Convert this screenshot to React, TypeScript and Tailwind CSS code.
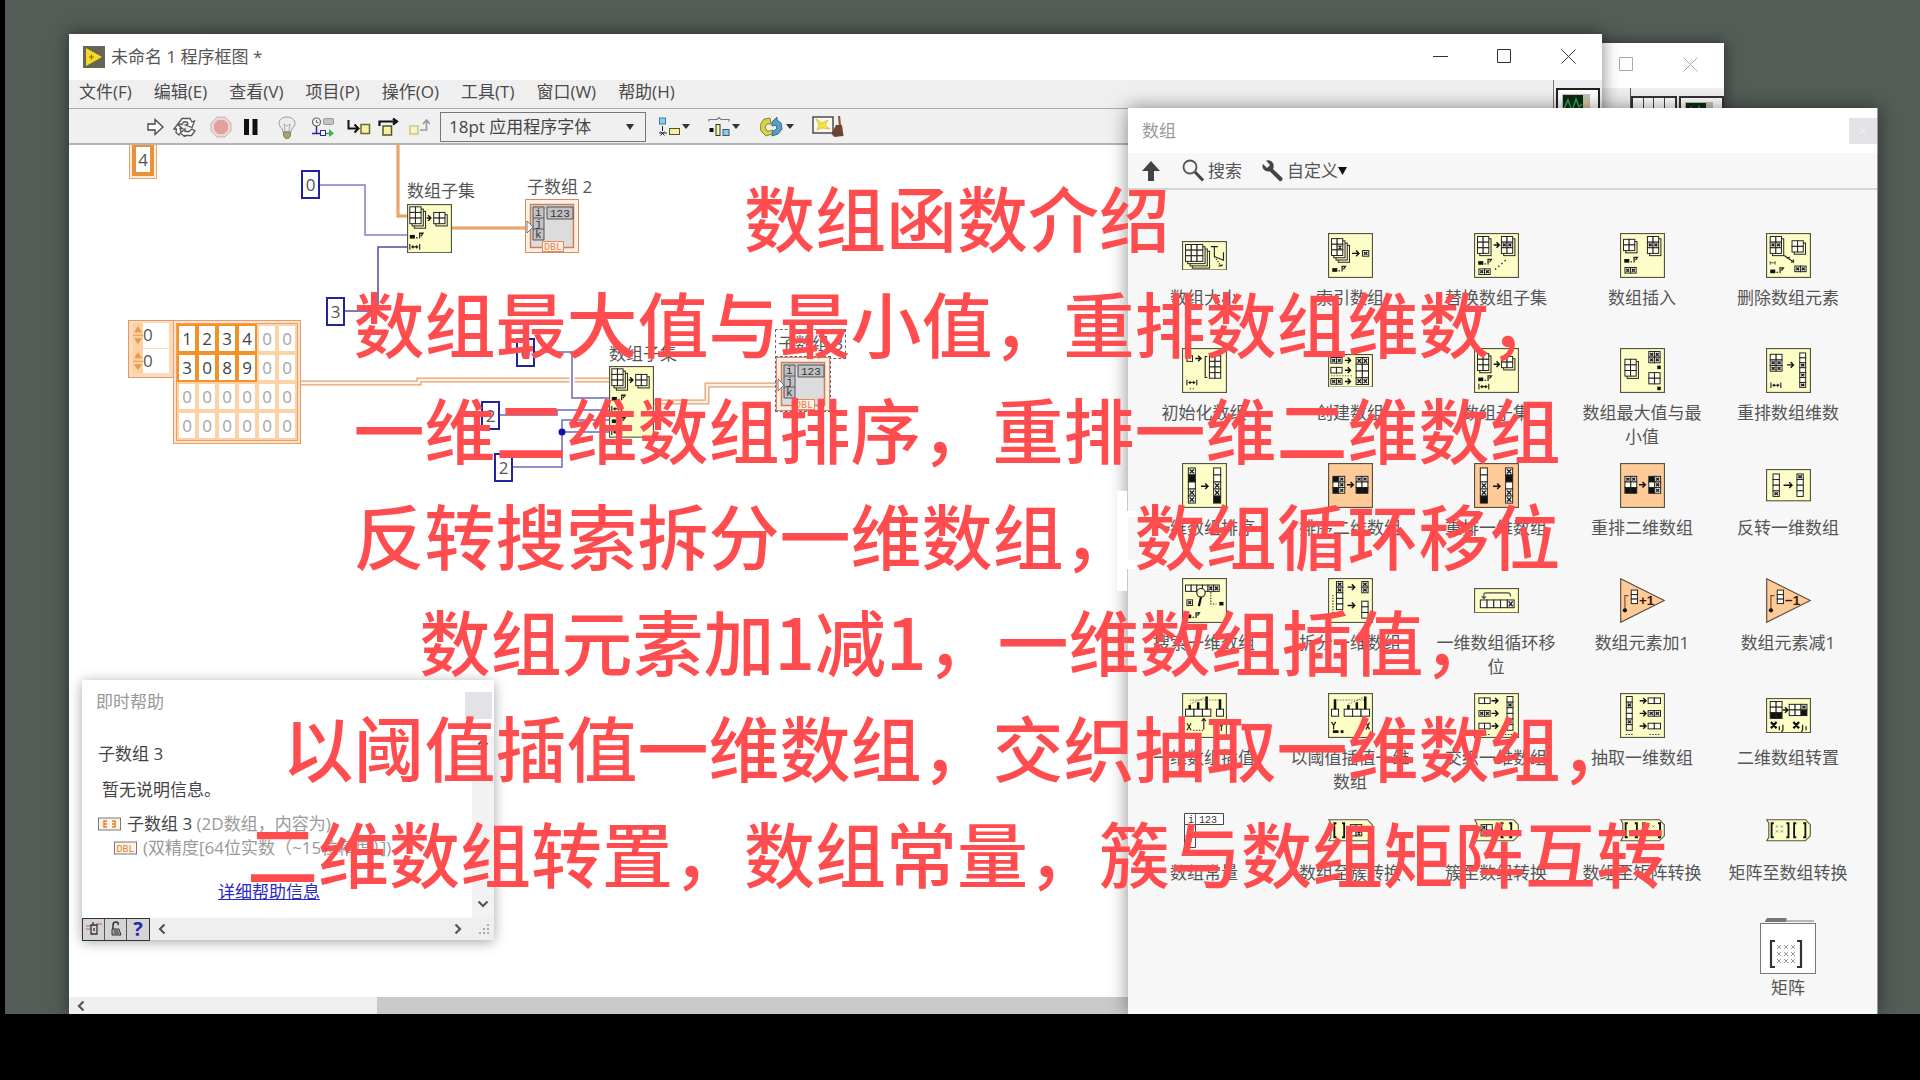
import React, { FC, ReactNode } from 'react'

const menus = ['文件(F)', '编辑(E)', '查看(V)', '项目(P)', '操作(O)', '工具(T)', '窗口(W)', '帮助(H)']

const captions = [
  '数组函数介绍',
  '数组最大值与最小值，重排数组维数，',
  '一维二维数组排序，重排一维二维数组',
  '反转搜索拆分一维数组，数组循环移位',
  '数组元素加1减1，一维数组插值，',
  '以阈值插值一维数组，交织抽取一维数组，',
  '二维数组转置，数组常量，簇与数组矩阵互转',
]

const YELLOW = '#fdfdc8'
const ORANGE = '#fdca98'

/* ---------- icon primitives, drawn on a 32 unit wide tile ---------- */

type CellsProps = { x: number; y: number; c: number; r: number; w?: number; h?: number; map?: string; fill?: string }

// map holds one character per cell: x = black, o = marked, anything else = empty
const Cells: FC<CellsProps> = ({ x, y, c, r, w = 4, h = 4, map = '', fill = '#fdfdf0' }) => (
  <g stroke="#222" strokeWidth="0.7">
    {Array.from({ length: c * r }, (_, i) => {
      const cx = x + (i % c) * w
      const cy = y + Math.floor(i / c) * h
      return (
        <g key={i}>
          <rect fill={map[i] === 'x' ? '#111' : fill} height={h} width={w} x={cx} y={cy} />
          {map[i] === 'o' && <path d={`M${cx + 1} ${cy + 1}l${w - 2} ${h - 2}m0 ${2 - h}l${2 - w} ${h - 2}`} strokeWidth="1" />}
        </g>
      )
    })}
  </g>
)

const Stack: FC<CellsProps & { n?: number }> = ({ n = 1, ...p }) => {
  const w = p.c * (p.w ?? 4)
  const h = p.r * (p.h ?? 4)
  return (
    <g>
      {Array.from({ length: n }, (_, i) => n - i).map(k => (
        <rect
          fill={YELLOW}
          height={h}
          key={k}
          stroke="#222"
          strokeWidth="0.7"
          width={w}
          x={p.x + k * 1.6}
          y={p.y + k * 1.6}
        />
      ))}
      <Cells {...p} />
    </g>
  )
}

const Arrow: FC<{ x: number; y: number; w?: number }> = ({ x, y, w = 5 }) => (
  <path d={`M${x} ${y}h${w}m-2 -2l2 2l-2 2`} fill="none" stroke="#111" strokeWidth="1" />
)

const Span: FC<{ x: number; y: number }> = ({ x, y }) => (
  <path
    d={`M${x} ${y - 2}v4M${x + 7} ${y - 2}v4M${x + 1} ${y}h5m-3.5 -1l-1 1l1 1m2 -2l1 1l-1 1`}
    fill="none"
    stroke="#222"
    strokeWidth="0.8"
  />
)

const Index: FC<{ x: number; y: number }> = ({ x, y }) => (
  <g>
    <rect fill="#111" height="2.6" width="3.6" x={x} y={y} />
    <path d={`M${x + 4.5} ${y + 2}h1M${x + 7} ${y + 2.4}v-3.6h2.4l-1.4 2`} fill="none" stroke="#222" strokeWidth="0.9" />
  </g>
)

const Tile: FC<{ h?: number; fill?: string; children?: ReactNode }> = ({ h = 32, fill = YELLOW, children }) => (
  <svg aria-hidden="true" className="block w-[45px]" viewBox={`0 0 32 ${h}`}>
    <rect fill={fill} height={h - 0.8} stroke="#55553f" strokeWidth="0.8" width="31.2" x="0.4" y="0.4" />
    {children}
  </svg>
)

const Tab: FC<{ children?: ReactNode }> = ({ children }) => (
  <svg aria-hidden="true" className="block w-[45px]" viewBox="0 0 32 16">
    <path d="M.5 .5H28L31.5 4V12L28 15.5H.5L2 13V3Z" fill={YELLOW} stroke="#55553f" strokeWidth="0.8" />
    {children}
  </svg>
)

const Bracket: FC<{ x: number; w: number; y?: number; h?: number }> = ({ x, w, y = 3, h = 10 }) => (
  <path
    d={`M${x + 2} ${y}h-1.5v${h}h1.5M${x + w - 2} ${y}h1.5v${h}h-1.5`}
    fill="none"
    stroke="#111"
    strokeWidth="1.3"
  />
)

const Dots: FC<{ x: number; y: number; c: number; r: number; s?: number }> = ({ x, y, c, r, s = 3 }) => (
  <g stroke="#777" strokeWidth="0.5">
    {Array.from({ length: c * r }, (_, i) => (
      <path d={`M${x + (i % c) * s} ${y + Math.floor(i / c) * s}l1.6 1.6m0 -1.6l-1.6 1.6`} key={i} />
    ))}
  </g>
)

const Triangle: FC<{ label: string }> = ({ label }) => (
  <svg aria-hidden="true" className="block w-[45px]" viewBox="0 0 32 32">
    <path d="M.5 .5L31.5 16L.5 31.5Z" fill={ORANGE} stroke="#5a4a3a" strokeWidth="0.8" />
    <path d="M3.5 22V12.5H6" fill="none" stroke="#7a4a20" strokeWidth="0.8" />
    <circle cx="3.5" cy="23" fill="#111" r="1.5" />
    <Cells c={1} h={3.2} r={3} w={4.4} x={8} y={8.6} />
    <text fill="#3a1808" fontFamily="Liberation Sans" fontSize="9.5" fontWeight="700" x="13.5" y="19.5">
      {label}
    </text>
  </svg>
)

const Bars: FC<{ x: number; lone: number }> = ({ x, lone }) => (
  <g>
    <Cells c={3} h={5} r={1} w={6} x={x} y={11.5} />
    <Cells c={1} h={5} r={1} w={5} x={lone} y={11.5} />
    <path
      d={`M${x + 3} 11.5v-3M${x + 9} 11.5v-5M${x + 15} 11.5v-9M${lone + 2.5} 11.5v-7`}
      fill="none"
      stroke="#111"
      strokeWidth="1.8"
    />
    <path
      d={`M${x + 3} 8L${x + 15} 2.6M${Math.min(x + 3, lone + 2)} 5H${Math.max(x + 15, lone + 2)}`}
      fill="none"
      stroke="#555"
      strokeDasharray="1 1"
      strokeWidth="0.6"
    />
  </g>
)

/* ---------- palette content ---------- */

const functions: { name: string; icon: ReactNode }[] = [
  {
    name: '数组大小',
    icon: (
      <Tile h={21}>
        <Stack c={3} n={3} r={3} w={4.1} x={2.5} y={2.5} />
        <path d="M20.5 4h5M23 4v7l6 2.5M23 11M26 18l3 -1M29.5 8v6" fill="none" stroke="#222" strokeWidth="0.8" />
        <path d="M23 11l5 7" stroke="#222" strokeDasharray="1 1" strokeWidth="0.8" />
      </Tile>
    ),
  },
  {
    name: '索引数组',
    icon: (
      <Tile>
        <Stack c={2} map="   o" n={3} r={3} w={4} x={2.5} y={4} />
        <Arrow x={17} y={14.5} w={5} />
        <Cells c={1} map="o" r={1} w={4.5} x={24.5} y={12.5} />
        <Index x={3} y={25} />
      </Tile>
    ),
  },
  {
    name: '替换数组子集',
    icon: (
      <Tile>
        <Stack c={2} n={1} r={3} w={4} x={2.5} y={2.5} />
        <Arrow x={14} w={4} y={8.5} />
        <Stack c={2} map="  oo" n={1} r={3} w={4} x={19.5} y={2.5} />
        <Index x={3} y={20} />
        <Cells c={2} map="oo" r={1} w={4} x={3.5} y={25.5} />
        <path d="M15 26l8 -7" stroke="#222" strokeDasharray="1 2" />
      </Tile>
    ),
  },
  {
    name: '数组插入',
    icon: (
      <Tile>
        <Stack c={2} n={1} r={2} w={4} x={2.5} y={4.5} />
        <Stack c={2} map="  oo" n={1} r={3} w={4} x={19.5} y={2.5} />
        <Index x={3} y={18.5} />
        <Cells c={2} map="oo" r={1} w={4} x={3.5} y={24.5} />
      </Tile>
    ),
  },
  {
    name: '删除数组元素',
    icon: (
      <Tile>
        <Stack c={2} map="  oo" n={1} r={3} w={4} x={3} y={2.5} />
        <Stack c={2} n={1} r={2} w={4} x={18.5} y={5.5} />
        <path d="M13 16l7 5m-5 -3l2 -1m1 4l2 -2" fill="none" stroke="#222" strokeWidth="0.8" />
        <path d="M3 20v2.500M3 21.200h3.500M6.500 20v2.500" stroke="#444" strokeWidth="0.6" />
        <Index x={3} y={26} />
        <Cells c={2} map="oo" r={1} w={4} x={20.5} y={23.5} />
      </Tile>
    ),
  },
  {
    name: '初始化数组',
    icon: (
      <Tile>
        <Cells c={1} r={1} x={3.5} y={5.5} />
        <Arrow x={9.5} w={4} y={7.5} />
        <path d="M18 6h-1.500v15h1.500" fill="none" stroke="#222" strokeWidth="0.8" />
        <Cells c={2} r={4} w={4} x={19.5} y={5.5} />
        <Span x={3.5} y={24.5} />
        <path d="M5.500 29h4" stroke="#444" strokeDasharray="1 1" strokeWidth="0.7" />
      </Tile>
    ),
  },
  {
    name: '创建数组',
    icon: (
      <Tile h={24}>
        <Cells c={2} map="oo" r={1} x={2} y={2.5} />
        <Cells c={2} r={1} x={2} y={9.5} />
        <Cells c={2} map="oo" r={1} x={2} y={17.5} />
        <Arrow x={12} w={4} y={4.5} />
        <Arrow x={12} w={4} y={11.5} />
        <Arrow x={12} w={4} y={19.5} />
        <Cells c={2} map="oo    oo" r={4} h={4.8} w={4.4} x={20} y={2.5} />
        <path d="M2 15.500h15" stroke="#444" strokeDasharray="1 1" strokeWidth="0.6" />
      </Tile>
    ),
  },
  {
    name: '数组子集',
    icon: (
      <Tile>
        <Stack c={2} n={1} r={3} w={4} x={2.5} y={4} />
        <Arrow x={14} w={4} y={11.5} />
        <Stack c={2} n={1} r={2} w={4} x={19.5} y={6} />
        <Index x={3} y={21} />
        <Span x={3.5} y={27.5} />
      </Tile>
    ),
  },
  {
    name: '数组最大值与最小值',
    icon: (
      <Tile>
        <Stack c={2} n={1} r={3} w={4} x={3.5} y={8} />
        <Cells c={2} map="oooo" r={2} x={20.5} y={2.5} />
        <rect fill="#111" height="2.500" width="2.500" x="26.500" y="12.500" />
        <Cells c={2} r={2} x={20.5} y={17.5} />
        <rect fill="#111" height="2.500" width="2.500" x="26.500" y="27.500" />
      </Tile>
    ),
  },
  {
    name: '重排数组维数',
    icon: (
      <Tile>
        <Cells c={2} map="  oooo" r={3} w={4.2} x={3} y={4.5} />
        <Arrow x={15} w={4.5} y={12} />
        <Cells c={1} h={3.5} map="  o o oo" r={7} w={4.2} x={24} y={3.5} />
        <Span x={3.5} y={26.5} />
      </Tile>
    ),
  },
  {
    name: '一维数组排序',
    icon: (
      <Tile>
        <Cells c={1} h={5} map="ox oo" r={5} w={5} x={4.5} y={3.5} />
        <Arrow x={13.5} w={5} y={16.5} />
        <Cells c={1} h={5} map="  oox" r={5} w={5} x={22.5} y={3.5} />
      </Tile>
    ),
  },
  {
    name: '排序二维数组',
    icon: (
      <Tile fill={ORANGE}>
        <Cells c={2} map="xo oxo" r={3} w={4.2} x={3.5} y={9.5} />
        <Arrow x={13.5} w={4.5} y={15.5} />
        <Cells c={2} map="oo  xx" r={3} w={4.2} x={20} y={9.5} />
      </Tile>
    ),
  },
  {
    name: '重排一维数组',
    icon: (
      <Tile fill={ORANGE}>
        <Cells c={1} h={5} map="  oox" r={5} w={5} x={4.5} y={3.5} />
        <Arrow x={13.5} w={5} y={16.5} />
        <Cells c={1} h={5} map="ox oo" r={5} w={5} x={22.5} y={3.5} />
      </Tile>
    ),
  },
  {
    name: '重排二维数组',
    icon: (
      <Tile fill={ORANGE}>
        <Cells c={2} map="oo  xx" r={3} w={4.2} x={3.5} y={9.5} />
        <Arrow x={13.5} w={4.5} y={15.5} />
        <Cells c={2} map="xo oxo" r={3} w={4.2} x={20.5} y={9.5} />
      </Tile>
    ),
  },
  {
    name: '反转一维数组',
    icon: (
      <Tile h={23}>
        <Cells c={1} h={4} map="   o" r={4} w={4.5} x={5} y={3.5} />
        <Arrow x={12.5} w={6} y={11.5} />
        <Cells c={1} h={4} map="o" r={4} w={4.5} x={22} y={3.5} />
      </Tile>
    ),
  },
  {
    name: '搜索一维数组',
    icon: (
      <Tile>
        <Cells c={6} h={4.5} map="    oo" r={1} w={4} x={2.5} y={5} />
        <circle cx="13.500" cy="10.500" fill={YELLOW} r="3" stroke="#222" strokeWidth="0.8" />
        <path d="M13.500 13.500l-1.500 6.500" stroke="#111" strokeWidth="1.600" />
        <Cells c={1} map="o" r={1} x={3.5} y={15.5} />
        <path d="M20.500 10v8.500h4" fill="none" stroke="#222" strokeDasharray="1 1" strokeWidth="0.8" />
        <rect fill="#111" height="2.500" width="3" x="26.500" y="17" />
        <Index x={3} y={26} />
      </Tile>
    ),
  },
  {
    name: '拆分一维数组',
    icon: (
      <Tile>
        <Cells c={1} map="oo   " r={5} w={4.5} x={6} y={2.5} />
        <Arrow x={14} w={5} y={6.5} />
        <Cells c={1} map="oo" r={2} w={4.5} x={24} y={2.5} />
        <Arrow x={14} w={5} y={19.5} />
        <Cells c={1} r={3} w={4.5} x={24} y={16.5} />
        <path d="M3.500 12v16" stroke="#333" strokeDasharray="1 1" strokeWidth="0.8" />
      </Tile>
    ),
  },
  {
    name: '一维数组循环移位',
    icon: (
      <Tile h={18}>
        <Cells c={5} h={5.5} map="    o" r={1} w={4.8} x={4.5} y={8.5} />
        <path d="M7 7V4.500Q7 3.500 8.500 3.500H24Q26 3.500 26 6M5.500 6l1.500 1.500L8.500 6" fill="none" stroke="#444" strokeWidth="0.8" />
      </Tile>
    ),
  },
  { name: '数组元素加1', icon: <Triangle label="+1" /> },
  { name: '数组元素减1', icon: <Triangle label="−1" /> },
  {
    name: '一维数组插值',
    icon: (
      <Tile>
        <Bars lone={24.5} x={2.5} />
        <path d="M3.500 21.500l3 5m0 -5l-3 5M15.500 26v-8m-1.500 2l1.500 -2l1.500 2M26.500 21.500l1.500 2.500l1.500 -2.500M28 24v3" fill="none" stroke="#222" strokeWidth="0.8" />
        <path d="M8 26.500h7" stroke="#222" strokeDasharray="1 1" strokeWidth="0.8" />
      </Tile>
    ),
  },
  {
    name: '以阈值插值一维数组',
    icon: (
      <Tile>
        <Bars lone={2.5} x={11.5} />
        <path d="M2.500 20.500l1.500 2.500l1.500 -2.500M4 23v3M27 21l2.500 5m0 -5l-2.500 5" fill="none" stroke="#222" strokeWidth="0.9" />
        <path d="M3.500 27.500h4m1.500 0h2" stroke="#111" strokeWidth="2" />
      </Tile>
    ),
  },
  {
    name: '交织一维数组',
    icon: (
      <Tile>
        <Cells c={2} r={1} x={3.5} y={3.5} />
        <Cells c={2} map="oo" r={1} x={3.5} y={12.5} />
        <Cells c={2} r={1} x={3.5} y={21.5} />
        <Arrow x={12.5} w={4.5} y={5.5} />
        <Arrow x={12.5} w={4.5} y={14.5} />
        <Arrow x={12.5} w={4.5} y={23.5} />
        <Cells c={1} map=" o  o " r={6} w={4.2} x={23.5} y={2.5} />
        <path d="M6 29.500h5M22 29.500h7" stroke="#333" strokeDasharray="1 1" strokeWidth="0.8" />
      </Tile>
    ),
  },
  {
    name: '抽取一维数组',
    icon: (
      <Tile>
        <Cells c={1} map=" o  o " r={6} w={4.2} x={4.5} y={2.5} />
        <Arrow x={14} w={4.5} y={5.5} />
        <Arrow x={14} w={4.5} y={14.5} />
        <Arrow x={14} w={4.5} y={23.5} />
        <Cells c={2} r={1} w={4.4} x={20} y={3.5} />
        <Cells c={2} map="oo" r={1} w={4.4} x={20} y={12.5} />
        <Cells c={2} r={1} w={4.4} x={20} y={21.5} />
        <path d="M4 29.500h5M21 29.500h8" stroke="#333" strokeDasharray="1 1" strokeWidth="0.8" />
      </Tile>
    ),
  },
  {
    name: '二维数组转置',
    icon: (
      <Tile h={25}>
        <Cells c={2} map="    xx" r={3} w={4.2} x={3} y={2.5} />
        <Arrow x={12} w={3.5} y={8.5} />
        <Cells c={3} map="  o  x" r={2} w={4.2} x={16.5} y={4.5} />
        <path d="M3.500 17l4 4.500m0 -4.500l-4 4.500M19.500 17l4 4.500m0 -4.500l-4 4.500" stroke="#111" strokeWidth="1.600" />
        <path d="M9.500 20v3M12 19v4l-1 1M26 19v4l-1 1M28.500 20v3" fill="none" stroke="#222" strokeWidth="0.9" />
      </Tile>
    ),
  },
  {
    name: '数组常量',
    icon: (
      <svg aria-hidden="true" className="block w-10" viewBox="0 0 40 35">
        <path d="M.5 .5h39v11h-39z" fill="#fff" stroke="#444" />
        <path d="M.5 11.500h11v23H.5z" fill="#fff" stroke="#445" />
        <path d="M11.500 .500v11M.500 23h11" stroke="#668" />
        <text fill="#333" fontFamily="Liberation Mono" fontSize="10" x="4" y="9.500">
          i
        </text>
        <text fill="#333" fontFamily="Liberation Mono" fontSize="10" x="15" y="9.500">
          123
        </text>
      </svg>
    ),
  },
  {
    name: '数组至簇转换',
    icon: (
      <Tab>
        <Bracket w={8} x={4} />
        <Cells c={2} h={4} map="o  o" r={2} x={16} y={4} />
      </Tab>
    ),
  },
  {
    name: '簇至数组转换',
    icon: (
      <Tab>
        <Cells c={2} h={4} map="o  o" r={2} x={5} y={4} />
        <Bracket w={8} x={19} />
      </Tab>
    ),
  },
  {
    name: '数组至矩阵转换',
    icon: (
      <Tab>
        <Bracket w={9} x={3.5} />
        <Bracket w={13} x={16} />
        <Dots c={2} r={2} s={3.5} x={19.5} y={4.5} />
      </Tab>
    ),
  },
  {
    name: '矩阵至数组转换',
    icon: (
      <Tab>
        <Bracket w={13} x={3.5} />
        <Dots c={2} r={2} s={3.5} x={7} y={4.5} />
        <Bracket w={9} x={19.5} />
      </Tab>
    ),
  },
]

const FolderIcon = () => (
  <svg aria-hidden="true" className="block w-14 shrink-0" viewBox="0 0 56 56">
    <path d="M5 4L8 0H26V3H54" fill="none" stroke="#777" />
    <path d="M7 0H26V4H5Z" fill="#777" />
    <rect fill="#fff" height="50" stroke="#777" width="55" x=".5" y="5.500" />
    <path d="M15 23h-4v26h4M37 23h4v26h-4" fill="none" stroke="#333" strokeWidth="2.200" />
    <g stroke="#999">
      {Array.from({ length: 9 }, (_, i) => (
        <path d={`M${17 + (i % 3) * 7} ${27 + Math.floor(i / 3) * 7}l4 4m0 -4l-4 4`} key={i} />
      ))}
    </g>
  </svg>
)

/* ---------- block diagram parts ---------- */

const Constant: FC<{ value: string; className: string }> = ({ value, className }) => (
  <div
    className={`absolute flex h-[29px] w-[19px] items-center justify-center border-2 border-[#23239b] bg-white text-[17px] text-[#555] ${className}`}
  >
    {value}
  </div>
)

const SubsetNode: FC<{ tall?: boolean; className: string }> = ({ tall, className }) => (
  <svg aria-hidden="true" className={`absolute w-[45px] ${className}`} viewBox={tall ? '0 0 32 51' : '0 0 32 35'}>
    <rect fill={YELLOW} height={tall ? 50.2 : 34.2} stroke="#55553f" strokeWidth="0.8" width="31.2" x="0.4" y="0.4" />
    <Stack c={2} n={2} r={3} w={4} x={2} y={2} />
    <Arrow x={14} w={3} y={10} />
    <Stack c={2} n={1} r={2} w={4} x={19} y={6} />
    <Index x={2} y={22} />
    <Span x={2} y={30.5} />
    {tall && <Index x={2} y={38} />}
    {tall && <Span x={2} y={47} />}
  </svg>
)

const Indicator: FC<{ className: string }> = ({ className }) => (
  <svg aria-hidden="true" className={`absolute size-[54px] ${className}`} viewBox="0 0 54 54">
    <rect fill="#fff0e6" height="53" stroke="#d98a63" width="53" x=".5" y=".5" />
    <rect fill="#dcdcde" height="43" stroke="#d07d55" strokeWidth="1.500" width="43" x="5.500" y="5.500" />
    <rect fill="#c3c3c8" height="4" width="42" x="6" y="6" />
    <path d="M8 8h11v33H8zM8 19h11M8 30h11M22 8h26v12H22z" fill="#c2c2c6" stroke="#555" />
    <g fill="#333" fontFamily="Liberation Mono" fontSize="11">
      <text x="10" y="17">
        i
      </text>
      <text x="10" y="28">
        j
      </text>
      <text x="10" y="39">
        k
      </text>
      <text x="25" y="18">
        123
      </text>
    </g>
    <path d="M2 22l6 6l-6 6z" fill="#fff" stroke="#555" strokeWidth="0.800" />
    <rect fill="#fff0e6" height="10" stroke="#e08a60" width="21" x="17.500" y="42.500" />
    <text fill="#e5824f" fontFamily="Liberation Mono" fontSize="10" x="19" y="51">
      DBL
    </text>
  </svg>
)

const cellValues = [
  ['1', '2', '3', '4', '0', '0'],
  ['3', '0', '8', '9', '0', '0'],
  ['0', '0', '0', '0', '0', '0'],
  ['0', '0', '0', '0', '0', '0'],
]

const ArrayConstant = () => (
  <div className="absolute top-[175px] left-[59px] flex items-start text-[17px]">
    <div className="flex h-[58px] w-[46px] flex-col gap-px border border-[#dd9a72] bg-[#fdd9b8] p-1 pt-0.5">
      {['0', '0'].map((v, i) => (
        <div className="flex flex-1 items-center bg-white" key={i}>
          <svg aria-hidden="true" className="h-full w-2.5 bg-[#fbd0a2]" viewBox="0 0 10 24">
            <path d="M1 9L5 3L9 9ZM1 15L5 21L9 15Z" fill="#e59a4d" />
            <path d="M0 12h10" stroke="#e59a4d" />
          </svg>
          <span className="leading-6 text-[#555]">{v}</span>
        </div>
      ))}
    </div>
    <div className="-ml-px border border-[#e39c6e] bg-[#fde3cd] p-0.5">
      <div className="flex flex-col border border-[#efa05c] bg-[#fbd3a6]">
        {cellValues.map((row, r) => (
          <div className="flex" key={r}>
            {row.map((v, c) => {
              const set = r < 2 && c < 4
              return (
                <div className={`flex h-[29px] w-5 p-0.5 ${set ? 'bg-[#f3912b]' : 'bg-[#fbd3a6]'}`} key={c}>
                  <span
                    className={`flex flex-1 items-center justify-center bg-white leading-6 ${set ? 'text-[#444]' : 'text-[#a5a5a5]'}`}
                  >
                    {v}
                  </span>
                </div>
              )
            })}
          </div>
        ))}
      </div>
    </div>
  </div>
)

const Wires = () => (
  <svg aria-hidden="true" className="absolute top-0 left-0" fill="none" height="400" viewBox="69 145 800 400" width="800">
    <g stroke="#e0924d" strokeWidth="3">
      <path d="M398 145V216H408M451 228H526" />
    </g>
    <path d="M398 145V216H408M451 228H526" stroke="#f7c79a" strokeWidth="0.800" />
    <g stroke="#e2a070" strokeWidth="5">
      <path d="M299 383H419V380H610M654 402H707V385H777" />
    </g>
    <g stroke="#fff3e6" strokeWidth="2.500">
      <path d="M299 383H419V380H610M654 402H707V385H777" />
    </g>
    <path d="M320 185H365V235H407" stroke="#7f7fd0" strokeWidth="1.500" />
    <path d="M345 311H378V247H407" stroke="#4c4ca0" strokeWidth="1.500" />
    <path d="M572 376V385" stroke="#fff" strokeWidth="5" />
    <g stroke="#6a6ac0" strokeWidth="1.500">
      <path d="M535 352H572V398H609M500 415H557V410H609M512 467H562V420H609M562 432H609" />
    </g>
    <circle cx="562" cy="432" fill="#1212a8" r="3.500" />
  </svg>
)

/* ---------- window parts ---------- */

const WindowButtons: FC<{ muted?: boolean; minimize?: boolean }> = ({ muted, minimize }) => (
  <div className={`flex h-full items-center pr-0.5 pb-0.5 ${muted ? 'text-[#aaa]' : 'text-[#333]'}`}>
    {minimize && (
      <button aria-label="最小化" className="flex h-full w-16 items-center justify-center" type="button">
        <svg className="size-[15px]" stroke="currentColor" viewBox="0 0 15 15">
          <path d="M0 7.500h15" />
        </svg>
      </button>
    )}
    <button aria-label="最大化" className="flex h-full w-16 items-center justify-center" type="button">
      <svg className="size-[15px]" fill="none" stroke="currentColor" viewBox="0 0 15 15">
        <path d="M.5 .5h13v13H.5z" />
      </svg>
    </button>
    <button aria-label="关闭" className="flex h-full w-16 items-center justify-center" type="button">
      <svg className="size-[15px]" fill="none" stroke="currentColor" viewBox="0 0 15 15">
        <path d="M.5 .5l14 14m0 -14l-14 14" />
      </svg>
    </button>
  </div>
)

const Scope = () => (
  <svg aria-hidden="true" className="ml-1 size-7" viewBox="0 0 28 28">
    <rect fill="#c9c4b4" height="28" width="28" />
    <rect fill="#0c2b16" height="20" width="20" x="1" y="1" />
    <path d="M2 15l4 -9l4 11l4 -12l3 8l3 -3" fill="none" stroke="#2fae50" strokeWidth="1.500" />
    <circle cx="24" cy="9" fill="#e9c9a0" r="2.500" />
  </svg>
)

const Chevron: FC<{ d: string }> = ({ d }) => (
  <svg aria-hidden="true" className="size-3" fill="none" stroke="#555" strokeWidth="2.200" viewBox="0 0 12 12">
    <path d={d} />
  </svg>
)

const ToolButton: FC<{ label: string; w?: string; children: ReactNode }> = ({ label, w = 'w-[30px]', children }) => (
  <button aria-label={label} className={`flex h-7 items-center justify-center ${w}`} type="button">
    {children}
  </button>
)

const Toolbar = () => (
  <div className="flex h-9 items-center gap-1.5 border-b-2 border-[#b4b4b4] bg-[#f0f0f0] pt-0.5 pl-[71px]">
    <div className="flex">
      <ToolButton label="运行">
        <svg className="h-[18px] w-[17px]" fill="#fff" stroke="#444" strokeWidth="1.300" viewBox="0 0 17 18">
          <path d="M1 6h7V1.500L16 9L8 16.500V12H1z" />
        </svg>
      </ToolButton>
      <ToolButton label="连续运行">
        <svg className="h-5 w-6" fill="#fff" stroke="#555" strokeWidth="1.300" viewBox="0 0 24 20">
          <path d="M5 7L9 1.500H17L19 5L21.500 4L19 10.500L12.500 8L15 7L14 5H10.500L9 7.500Z" />
          <path d="M19 12L22 14L18.500 18.500H12V20L7.500 16L12 12V14.500H16Z" />
          <path d="M1 12L4.500 7.500L9.500 11.500L7 11.500L8 15L6 18L3 15.500L3.500 12Z" />
        </svg>
      </ToolButton>
    </div>
    <div className="flex">
      <ToolButton label="中止执行">
        <svg className="size-[22px]" viewBox="0 0 22 22">
          <path d="M7 1h8l6 6v8l-6 6H7l-6 -6V7z" fill="#ecd6d6" stroke="#c9b3b3" />
          <path d="M8 4h6l4 4v6l-4 4H8l-4 -4V8z" fill="#e3a0a0" />
        </svg>
      </ToolButton>
      <ToolButton label="暂停">
        <svg className="h-4 w-3.5" viewBox="0 0 14 16">
          <path d="M0 0h5v16H0zM8.500 0h5v16h-5z" fill="#111" />
        </svg>
      </ToolButton>
    </div>
    <ToolButton label="高亮显示执行过程">
      <svg className="h-[23px] w-[18px]" viewBox="0 0 18 23">
        <path d="M5 16C5 12 1 11 1 7.500C1 3.500 4.500 1 9 1s8 2.500 8 6.500C17 11 13 12 13 16z" fill="#ececec" stroke="#999" />
        <path d="M7 15L6 8l3 2l3 -2l-1 7" fill="none" stroke="#aaa" />
        <path d="M5.500 16h7v4l-2 2.500h-3l-2 -2.500z" fill="#a9a46a" stroke="#77734a" strokeWidth="0.800" />
      </svg>
    </ToolButton>
    <ToolButton label="保存连线值">
      <svg className="h-5 w-6" fill="none" viewBox="0 0 24 20">
        <circle cx="5.500" cy="5" r="4" stroke="#666" strokeWidth="1.200" />
        <path d="M5.500 3v2.500h2" stroke="#666" />
        <rect fill="#c4c4c4" height="6" rx="1.500" stroke="#999" width="10" x="12.500" y="1.500" />
        <path d="M5.500 9v7M1 16.500h10" stroke="#2a2aa0" strokeWidth="1.500" />
        <rect fill="#fff" height="5" stroke="#2a2aa0" width="5" x="9.500" y="13.500" />
        <path d="M15 16.500h4" stroke="#3aa04a" strokeWidth="1.500" />
        <path d="M18 12l5 4.500l-5 3.500z" fill="#3fb050" />
      </svg>
    </ToolButton>
    <div className="flex">
      <ToolButton label="单步步入">
        <svg className="h-4 w-6" fill="none" viewBox="0 0 24 16">
          <path d="M1.500 1v8.500h9M7.500 5.500l4 4l-4 4" stroke="#111" strokeWidth="2" />
          <rect fill="#f6f3a0" height="9" stroke="#6a6a30" strokeWidth="1.500" width="8.500" x="14" y="5.500" />
        </svg>
      </ToolButton>
      <ToolButton label="单步步过">
        <svg className="h-[18px] w-[22px]" fill="none" viewBox="0 0 22 18">
          <path d="M1.500 8V3.500H18M15 .5l4 3l-4 3" stroke="#111" strokeWidth="2.200" />
          <rect fill="#f6f3a0" height="9" stroke="#55552a" strokeWidth="1.500" width="8.500" x="5" y="8" />
        </svg>
      </ToolButton>
      <ToolButton label="单步步出">
        <svg className="h-4 w-[21px]" fill="none" viewBox="0 0 21 16">
          <rect fill="#f8f6c0" height="8" stroke="#c9c58a" strokeWidth="1.500" width="8" x="1" y="7" />
          <path d="M11 11h6.500V2M14 5l3.500 -4l3.500 4" stroke="#9a9a9a" strokeWidth="1.700" />
        </svg>
      </ToolButton>
    </div>
    <div className="grid items-center">
      <select
        aria-label="字体"
        className="col-start-1 row-start-1 h-[30px] w-[206px] appearance-none border border-[#777] bg-[#f0f0f0] pl-2 text-[17px] text-[#444]"
      >
        <option>18pt 应用程序字体</option>
      </select>
      <svg aria-hidden="true" className="pointer-events-none col-start-1 row-start-1 mr-3 h-1.5 w-2 justify-self-end" viewBox="0 0 8 6">
        <path d="M0 0h8L4 6z" fill="#333" />
      </svg>
    </div>
    <ToolButton label="对齐对象" w="w-11">
      <svg className="h-5 w-8" viewBox="0 0 32 20">
        <rect fill="#8fd0e8" height="6" stroke="#3a7a9a" width="6" x="1.500" y="1" />
        <path d="M4.500 9v5M1 16h8M2.500 18.500l4 -4m0 4l-4 -4" fill="none" stroke="#222" />
        <rect fill="#f4f1a0" height="6" stroke="#55552a" width="10" x="11.500" y="11.500" />
        <path d="M24 7h8l-4 5z" fill="#333" />
      </svg>
    </ToolButton>
    <ToolButton label="分布对象" w="w-11">
      <svg className="h-5 w-8" viewBox="0 0 32 20">
        <path d="M1 4.500V2.500H9L11 .5L13 2.500H21V4.500" fill="none" stroke="#777" strokeWidth="1.200" />
        <rect fill="#111" height="4" width="4" x="1.500" y="11" />
        <rect fill="#f4f1a0" height="11" stroke="#333" width="4" x="8" y="7.500" />
        <rect fill="#8fc8e8" height="6" stroke="#3a5a7a" width="6" x="15" y="12.500" />
        <path d="M24 7h8l-4 5z" fill="#333" />
      </svg>
    </ToolButton>
    <ToolButton label="重新排序" w="w-[50px]">
      <svg className="h-5 w-[34px]" viewBox="0 0 34 20">
        <path d="M10 1L4 2L0 8L1 14L6 19L12 17L13 13L10 14L7 14L5 10L7 7L11 7Z" fill="#d8d24a" stroke="#8a8630" />
        <path d="M12 5L17 0V3L21 6L22 12L18 17L12 19L13 14L17 12L16 8L12 9Z" fill="#5aa0c8" stroke="#2f6a90" />
        <path d="M26 7h8l-4 5z" fill="#333" />
      </svg>
    </ToolButton>
    <ToolButton label="整理程序框图" w="w-10">
      <svg className="h-[22px] w-8" viewBox="0 0 32 22">
        <rect fill="#f8f8f0" height="16" stroke="#333" strokeWidth="1.300" width="20" x="1" y="1" />
        <path d="M4 3l6 4l6 -3l-3 5l5 4l-8 -1l-5 2l2 -5z" fill="#f2e23a" stroke="#c0b030" strokeWidth="0.600" />
        <path d="M27 0l1 10" stroke="#8a5a3a" strokeWidth="2.200" />
        <path d="M24 9h6l1.500 11l-9 1l-3 -3z" fill="#6a4630" />
      </svg>
    </ToolButton>
  </div>
)

const HelpWindow = () => (
  <section className="absolute top-[535px] left-[13px] flex h-[260px] w-[412px] flex-col bg-white text-[17px] text-[#444] shadow-[0_2px_12px_rgba(0,0,0,0.35)]">
    <header className="flex h-14 items-start justify-between pt-3 pr-0.5 pl-3.5">
      <h2 className="leading-5 text-[#999]">即时帮助</h2>
      <button aria-label="关闭" className="size-[27px] bg-[#e2e2e7]" type="button" />
    </header>
    <div className="flex flex-1">
      <div className="flex flex-1 flex-col items-start pt-1 pl-4 whitespace-nowrap">
        <p className="h-9 leading-7">子数组 3</p>
        <p className="h-9 pl-1 leading-7">暂无说明信息。</p>
        <p className="flex h-6 items-center gap-1.5 text-[#999]">
          <svg aria-hidden="true" className="h-3.5 w-[23px]" viewBox="0 0 23 14">
            <rect fill="#fff4ea" height="12" stroke="#777" width="22" x=".5" y="1" />
            <path d="M9 4h-3v6h3M6 7h3M14 4h3v6h-3M14 7h3" fill="none" stroke="#e08030" strokeWidth="1.500" />
          </svg>
          <span>
            <span className="text-[#444]">子数组 3</span> (2D数组，内容为)
          </span>
        </p>
        <p className="ml-4 flex h-6 items-center gap-1.5 text-[#999]">
          <svg aria-hidden="true" className="h-3.5 w-[23px]" viewBox="0 0 23 14">
            <rect fill="#fff4ea" height="12" stroke="#777" width="22" x=".5" y="1" />
            <text fill="#e08030" fontFamily="Liberation Mono" fontSize="10" x="2.500" y="10.500">
              DBL
            </text>
          </svg>
          <span>(双精度[64位实数（~15位精度）])</span>
        </p>
        <a className="mt-5 self-center pr-8 leading-6 text-[#2a2ac0] underline" href="#help">
          详细帮助信息
        </a>
      </div>
      <div className="flex w-[22px] flex-col items-center justify-between bg-[#f2f2f3] pb-2">
        <Chevron d="M1.500 8.500L6 4L10.500 8.500" />
        <Chevron d="M1.500 3.500L6 8L10.500 3.500" />
      </div>
    </div>
    <footer className="flex h-[22px] shrink-0 items-center bg-[#efefef]">
      <div className="flex h-[23px] border border-[#333] bg-[#d4d4d6]">
        <button aria-label="显示可选接线端" className="flex w-[22px] items-center justify-center border-r border-[#555]" type="button">
          <svg className="size-4" fill="none" viewBox="0 0 16 16">
            <path d="M0 5h5M0 8h5M10 3h6" stroke="#c06060" />
            <path d="M5 4h6v9H5zM7 1v3M8 7v3" stroke="#333" strokeWidth="1.300" />
          </svg>
        </button>
        <button aria-label="锁定" className="flex w-[22px] items-center justify-center border-r border-[#555]" type="button">
          <svg className="size-4" fill="none" stroke="#333" viewBox="0 0 16 16">
            <path d="M5 8V4q0 -3 3 -3t2 3" strokeWidth="1.500" />
            <path d="M4 8h7l2 6H4zM6 10h4M6 12h5" fill="#aaa" />
          </svg>
        </button>
        <button aria-label="详细帮助" className="w-[22px] text-xl leading-5 font-bold text-[#2a2ab0]" type="button">
          ?
        </button>
      </div>
      <div className="flex flex-1 items-center justify-between pr-[34px] pl-1.5">
        <Chevron d="M8.500 1.500L4 6L8.500 10.500" />
        <Chevron d="M3.500 1.500L8 6L3.500 10.500" />
      </div>
      <svg aria-hidden="true" className="mr-1 -ml-5 size-3" fill="#aaa" viewBox="0 0 12 12">
        <path d="M9 1h2v2H9zM5 5h2v2H5zM9 5h2v2H9zM1 9h2v2H1zM5 9h2v2H5zM9 9h2v2H9z" />
      </svg>
    </footer>
  </section>
)

const DiagramWindow = () => (
  <section className="absolute top-[34px] right-[318px] bottom-0 left-[69px] flex flex-col bg-white shadow-[0_0_16px_rgba(0,0,0,0.5)]">
    <header className="flex h-[46px] shrink-0 items-center justify-between">
      <div className="flex items-center gap-1.5 pl-3.5">
        <svg aria-hidden="true" className="size-[22px]" viewBox="0 0 22 22">
          <rect fill="#666657" height="22" width="22" />
          <path d="M3 2L19 11L3 20Z" fill="#f7dc1e" />
          <path d="M6 11h5M8.500 8.500v5" stroke="#8a6a10" strokeWidth="1.200" />
        </svg>
        <h1 className="text-[17px] text-[#555]">未命名 1 程序框图 *</h1>
      </div>
      <WindowButtons minimize />
    </header>
    <nav className="flex h-[29px] shrink-0 items-stretch justify-between border-b border-[#aaa] bg-[#f0eff0]">
      <div className="flex items-center gap-[22px] pb-1 pl-2.5">
        {menus.map(m => (
          <button className="text-[17px] leading-6 text-[#4a4a4a]" key={m} type="button">
            {m}
          </button>
        ))}
      </div>
      <div className="border-l border-[#777] pt-2 pr-0.5 pl-0.5">
        <div className="h-full w-11 overflow-hidden border-2 border-b-0 border-[#222] bg-white pt-1">
          <Scope />
        </div>
      </div>
    </nav>
    <Toolbar />
    <div className="relative flex-1 overflow-hidden">
      <Wires />
      <div className="absolute top-0 left-[60px] h-[34px] w-7 border border-t-0 border-[#e8a868] bg-[#fdebd8] px-0.5 pb-0.5">
        <div className="flex h-full items-center justify-center border-4 border-t-2 border-[#e8923c] bg-white text-[17px] text-[#555]">
          4
        </div>
      </div>
      <Constant className="top-[25px] left-[232px]" value="0" />
      <Constant className="top-[152px] left-[257px]" value="3" />
      <Constant className="top-[193px] left-[447px]" value="0" />
      <Constant className="top-[256px] left-[412px]" value="2" />
      <Constant className="top-[308px] left-[425px]" value="2" />
      <span className="absolute top-[34px] left-[338px] text-[17px] leading-6 text-[#555]">数组子集</span>
      <SubsetNode className="top-[59px] left-[338px]" />
      <span className="absolute top-[30px] left-[458px] text-[17px] leading-6 text-[#555]">子数组 2</span>
      <Indicator className="top-[54px] left-[456px]" />
      <span className="absolute top-[197px] left-[540px] text-[17px] leading-6 text-[#555]">数组子集</span>
      <SubsetNode className="top-[221px] left-[540px]" tall />
      <span className="absolute top-[184px] left-[706px] border border-dashed border-[#667] px-0.5 text-[17px] leading-7 text-[#555]">
        子数组 3
      </span>
      <Indicator className="top-[212px] left-[707px] outline-1 outline-[#667] outline-dashed" />
      <ArrayConstant />
      <HelpWindow />
    </div>
    <div className="flex h-[17px] shrink-0 items-center bg-[#efefef]">
      <div className="w-[308px] pl-1.5">
        <Chevron d="M8.500 1.500L4 6L8.500 10.500" />
      </div>
      <div className="h-full flex-1 bg-[#cacaca]" />
    </div>
  </section>
)

const FrontPanelWindow = () => (
  <section className="absolute top-[43px] right-[196px] bottom-0 left-[200px] bg-white shadow-[0_0_14px_rgba(0,0,0,0.5)]">
    <header className="flex h-[45px] justify-end">
      <WindowButtons muted />
    </header>
    <div className="flex h-[30px] justify-end bg-[#f0f0f0]">
      <div className="flex gap-0.5 border-l border-[#555] pt-2">
        <div className="grid w-[46px] grid-cols-4 divide-x divide-[#444] border-2 border-b-0 border-[#333] bg-white">
          <span />
          <span />
          <span />
          <span />
        </div>
        <div className="w-[45px] overflow-hidden border-2 border-b-0 border-[#333] bg-white pt-1">
          <Scope />
        </div>
      </div>
    </div>
  </section>
)

const PaletteWindow = () => (
  <section className="absolute top-[108px] right-[42px] bottom-0 w-[750px] border-r border-[#999] bg-[#f7f7f8] shadow-[0_0_18px_rgba(0,0,0,0.45)]">
    <header className="flex h-[45px] items-center justify-between bg-white pl-3.5">
      <h2 className="text-[17px] text-[#999]">数组</h2>
      <button aria-label="关闭" className="flex h-[26px] w-7 items-center justify-center bg-[#e2e2e7] text-sm text-[#f0f0f4]" type="button">
        ×
      </button>
    </header>
    <div className="flex h-[37px] items-center border-b-2 border-[#d4d4d4] pl-3.5 text-[17px] text-[#555]">
      <button aria-label="返回上一级" type="button">
        <svg className="h-5 w-[18px]" viewBox="0 0 18 20">
          <path d="M9 0L18 10H12V20H6V10H0z" fill="#444" />
        </svg>
      </button>
      <button className="ml-[22px] flex items-center gap-1" type="button">
        <svg aria-hidden="true" className="h-[23px] w-[22px]" fill="none" viewBox="0 0 22 23">
          <circle cx="8" cy="8" r="6.500" stroke="#555" strokeWidth="1.800" />
          <path d="M13 13L21 21.500" stroke="#444" strokeWidth="3" />
        </svg>
        搜索
      </button>
      <button className="ml-5 flex items-center gap-1" type="button">
        <svg aria-hidden="true" className="h-[22px] w-[21px]" viewBox="0 0 21 22">
          <path d="M4 0.500Q9 -1 11.500 4Q12 7 11 9L20.500 18Q21 21 18 21.500L8 11.500Q3 12 1 8.500Q0 6 1 4L5 8L8 5Z" fill="#444" />
        </svg>
        自定义
        <svg aria-hidden="true" className="-ml-1 h-2 w-[9px]" viewBox="0 0 9 8">
          <path d="M0 0h9L4.500 8z" fill="#111" />
        </svg>
      </button>
    </div>
    <ul className="mt-[43px] grid auto-rows-[115px] grid-cols-5 pr-4 pl-[3px]">
      {functions.map(({ name, icon }) => (
        <li className="flex flex-col items-center gap-2" key={name}>
          <div className="flex h-[45px] shrink-0 items-center justify-center">{icon}</div>
          <span className="w-[120px] text-center text-[17px] leading-6 text-[#555]">{name}</span>
        </li>
      ))}
      <li className="col-start-5 flex flex-col items-center gap-2">
        <div className="flex h-[45px] shrink-0 items-center justify-center">
          <FolderIcon />
        </div>
        <span className="text-[17px] leading-6 text-[#555]">矩阵</span>
      </li>
    </ul>
  </section>
)

const App: FC = () => (
  <div className="flex min-h-screen flex-col bg-black font-['Open_Sans','Noto_Sans_CJK_SC',sans-serif]">
    <main className="relative ml-[5px] flex-1 overflow-hidden bg-[#535c56]">
      <div className="absolute inset-y-0 right-0 -left-[5px]">
        <FrontPanelWindow />
        <DiagramWindow />
        <PaletteWindow />
        <svg aria-hidden="true" className="absolute top-[491px] left-[1117px]" fill="#fff" height="100" viewBox="0 0 50 100" width="50">
          <path d="M0 0H10V20H20V26H11V69H42L50 78H10V100H0Z" />
        </svg>
        <div className="pointer-events-none absolute inset-x-0 top-[162px] pr-1.5 text-center font-['Noto_Sans_CJK_SC',sans-serif] text-[71px] leading-[106px] font-medium whitespace-nowrap text-[#ff4d4f]">
          {captions.map(line => (
            <p key={line}>{line}</p>
          ))}
        </div>
      </div>
    </main>
    <div className="h-[66px] shrink-0 bg-black" />
  </div>
)

export default App
